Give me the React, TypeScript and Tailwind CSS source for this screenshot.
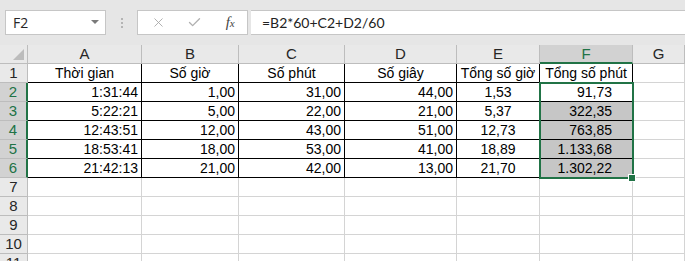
import { X, Check } from 'lucide-react';

const cols = ['A', 'B', 'C', 'D', 'E', 'F', 'G'];

const headers = ['Thời gian', 'Số giờ', 'Số phút', 'Số giây', 'Tổng số giờ', 'Tổng số phút'];

const data = [
  ['1:31:44', '1,00', '31,00', '44,00', '1,53', '91,73'],
  ['5:22:21', '5,00', '22,00', '21,00', '5,37', '322,35'],
  ['12:43:51', '12,00', '43,00', '51,00', '12,73', '763,85'],
  ['18:53:41', '18,00', '53,00', '41,00', '18,89', '1.133,68'],
  ['21:42:13', '21,00', '42,00', '13,00', '21,70', '1.302,22'],
];

const rowCls = 'grid grid-cols-[28px_114px_97px_106px_112px_83px_93px_1fr] h-[19px]';
const cellBase = 'flex items-end text-[14px] leading-[13px] pb-[2px] text-black whitespace-nowrap border-r border-b';

export default function App() {
  return (
    <div className="w-[685px] h-[261px] overflow-hidden bg-white font-['Liberation_Sans',Arial,sans-serif]">
      {/* formula bar */}
      <div className="h-[45px] bg-[#e6e6e6] flex items-start pt-[10px]">
        <div className="ml-[5px] w-[101px] h-[25px] bg-white border border-[#c6c6c6] flex items-center justify-between pl-[7px] pr-[6px]">
          <span className="font-['Open_Sans',sans-serif] text-[14px] text-[#262626]">F2</span>
          <svg width="8" height="5" viewBox="0 0 8 5">
            <path d="M0 0 L8 0 L4 4 Z" fill="#7a7a7a" />
          </svg>
        </div>
        <div className="w-[31px] h-[25px] flex flex-col items-center justify-center gap-[2px]">
          <span className="w-[2px] h-[2px] bg-[#b4b4b4]" />
          <span className="w-[2px] h-[2px] bg-[#b4b4b4]" />
          <span className="w-[2px] h-[2px] bg-[#b4b4b4]" />
        </div>
        <div className="w-[111px] h-[25px] bg-white border border-[#c6c6c6] flex items-center">
          <div className="w-[38px] flex justify-center pl-[3px]">
            <X size={15} strokeWidth={1.4} color="#a6a6a6" />
          </div>
          <div className="w-[38px] flex justify-center">
            <Check size={15} strokeWidth={2.2} color="#b0b0b0" />
          </div>
          <div className="w-[34px] flex justify-center">
            <span className="font-['Liberation_Serif',serif] italic text-[15px] text-[#444]">
              f<span className="text-[11px]">x</span>
            </span>
          </div>
        </div>
        <div className="ml-[3px] flex-1 h-[25px] bg-white border-y border-[#c6c6c6] flex items-center pl-[11px]">
          <span className="font-['Lato',sans-serif] text-[14px] text-[#222]">=B2*60+C2+D2/60</span>
        </div>
      </div>

      {/* sheet */}
      <div className="relative">
        {/* column headers */}
        <div className={rowCls}>
          <div className="relative bg-[#e9e9e9] border-r border-b border-[#bdbdbd]">
            <svg className="absolute right-[3px] bottom-[3px]" width="11" height="11" viewBox="0 0 11 11">
              <path d="M11 0 L11 11 L0 11 Z" fill="#bcbcbc" />
            </svg>
          </div>
          {cols.map((c) =>
            c === 'F' ? (
              <div
                key={c}
                className="flex items-end justify-center pb-[1px] text-[15px] leading-[15px] text-[#217346] bg-[#d2d2d2] border-r border-[#bdbdbd] border-b-2 border-b-[#217346]"
              >
                {c}
              </div>
            ) : (
              <div
                key={c}
                className="flex items-end justify-center pb-[2px] text-[15px] leading-[15px] text-[#262626] bg-[#e9e9e9] border-r border-b border-[#bdbdbd]"
              >
                {c}
              </div>
            )
          )}
        </div>

        {/* row 1 */}
        <div className={rowCls}>
          <div className="flex items-end justify-center pb-[2px] text-[15px] leading-[15px] text-[#262626] bg-[#e9e9e9] border-r border-b border-[#bdbdbd]">
            1
          </div>
          {headers.map((h) => (
            <div key={h} className={`${cellBase} justify-center border-black`}>
              {h}
            </div>
          ))}
          <div className={`${cellBase} border-[#d4d4d4]`} />
        </div>

        {/* data rows */}
        {data.map((r, i) => (
          <div key={i} className={rowCls}>
            <div className="flex items-end justify-center pb-[2px] text-[15px] leading-[15px] text-[#217346] bg-[#d2d2d2] border-b border-[#bdbdbd] border-r-2 border-r-[#217346]">
              {i + 2}
            </div>
            {r.map((v, j) => (
              <div
                key={j}
                className={`${cellBase} border-black ${
                  j === 4 ? 'justify-center' : 'justify-end pr-[3px]'
                } ${j === 5 ? 'pr-[20px]' : ''} ${j === 5 && i > 0 ? 'bg-[#c6c6c6]' : ''}`}
              >
                {v}
              </div>
            ))}
            <div className={`${cellBase} border-[#d4d4d4]`} />
          </div>
        ))}

        {/* empty rows */}
        {[7, 8, 9, 10, 11].map((n) => (
          <div key={n} className={rowCls}>
            <div className="flex items-end justify-center pb-[2px] text-[15px] leading-[15px] text-[#262626] bg-[#e9e9e9] border-r border-b border-[#bdbdbd]">
              {n}
            </div>
            {cols.map((c) => (
              <div key={c} className={`${cellBase} border-[#d4d4d4]`} />
            ))}
          </div>
        ))}

        {/* selection outline F2:F6 */}
        <div className="absolute left-[539px] top-[37px] w-[95px] h-[97px] border-2 border-[#217346] pointer-events-none" />
        <div className="absolute left-[628px] top-[129px] w-[8px] h-[8px] bg-[#217346] border border-white" />
      </div>
    </div>
  );
}
